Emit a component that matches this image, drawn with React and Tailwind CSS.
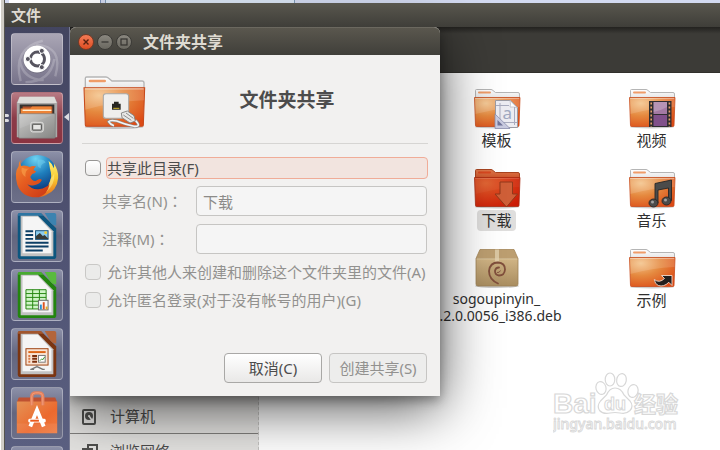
import React, { useState } from 'react';

const FolderIcon = ({ id, open = false, className = 'w-12 h-[42px]', children }) => (
  <svg viewBox="0 0 48 42" className={className} aria-hidden="true">
    <defs>
      <radialGradient id={`${id}-body`} cx="0.25" cy="0.2" r="0.95">
        <stop offset="0" stopColor={open ? '#e0602c' : '#f3c288'} />
        <stop offset="0.45" stopColor={open ? '#d8401a' : '#e5893f'} />
        <stop offset="1" stopColor={open ? '#cb1c06' : '#dc4a15'} />
      </radialGradient>
      <linearGradient id={`${id}-tab`} x1="0" y1="0" x2="0" y2="1">
        <stop offset="0" stopColor={open ? '#e07a4c' : '#ffffff'} />
        <stop offset="1" stopColor={open ? '#c95026' : '#e2e2e2'} />
      </linearGradient>
    </defs>
    <ellipse cx="24" cy="39" rx="22" ry="1.5" fill="#000" opacity="0.2" />
    <path d="M2.500 11V2.500q0-1 1-1H18q1 0 2 1l2.500 2H45q1.500 0 1.500 1.500V11z" fill={`url(#${id}-tab)`} stroke={open ? '#a84420' : '#b5b5b5'} />
    <rect x="5" y="3.500" width="13" height="2" rx="1" fill={open ? '#d9471f' : '#ef9c68'} />
    <path d="M1.500 9.500h45.500L46 37.500q0 1-1 1H3.500q-1 0-1-1z" fill={`url(#${id}-body)`} stroke={open ? '#a82a10' : '#c64a1c'} strokeWidth="0.8" />
    <path d="M2.200 10.400h44" stroke="#fff" opacity={open ? '0.2' : '0.5'} strokeWidth="0.8" />
    <path d="M2 10h44.500v9Q24 20 2.300 26z" fill="#fff" opacity={open ? '0.04' : '0.14'} />
    {children}
  </svg>
);

const TemplateBadge = () => (
  <g>
    <path d="M22.500 12.500h15l7 7v20h-22z" fill="#ececf2" stroke="#9b9ba3" />
    <path d="M37 12.500q1 4 0 6.500 4-.5 7.500 1z" fill="#fff" stroke="#b5b5bd" strokeWidth="0.7" />
    <path d="M27 15v22M41.500 19v18M23 17.500h13M23 34.500h21" stroke="#a9acbf" strokeWidth="1" />
    <text x="29.500" y="31" fontSize="17" fontFamily="Noto Sans" fill="#a0a8c0">a</text>
    <path d="M22 26l15 14.500H22z" fill="#c9cbe0" stroke="#8c8fae" strokeWidth="0.8" />
    <path d="M24.500 32v5.500h5.500z" fill="#70749a" />
  </g>
);

const VideoBadge = () => (
  <g>
    <rect x="21" y="13" width="22.500" height="26" fill="#2f2d30" />
    <rect x="25.500" y="14" width="13.500" height="12" fill="#a47aa3" />
    <rect x="25.500" y="27" width="13.500" height="11" fill="#80508a" />
    <path d="M25.500 14h13.500v5q-7 4-13.500 5z" fill="#fff" opacity="0.2" />
    <path d="M23.200 14.500V39M41.400 14.500V39" stroke="#e5a06a" strokeWidth="1.600" strokeDasharray="2 2" />
  </g>
);

const MusicBadge = () => (
  <g fill="#4b4b4a" stroke="#262626" strokeWidth="0.9">
    <path d="M27 34V15.500L43.500 12v20.500h-3V20L30 22v13z" />
    <ellipse cx="25.500" cy="35" rx="4.500" ry="4" />
    <ellipse cx="38.500" cy="33" rx="4.500" ry="4" />
    <circle cx="24.500" cy="34" r="1.500" fill="#a2a2a2" stroke="none" />
    <circle cx="37.500" cy="32" r="1.500" fill="#a2a2a2" stroke="none" />
  </g>
);

const DownloadBadge = () => (
  <path d="M27 14h12.500v12h5L33.500 39 22 26h5z" fill="#cf5f38" stroke="#92391b" strokeLinejoin="round" />
);

const LinkBadge = () => (
  <path d="M33.500 27.500H44v10l-3.200-3.200q-5 5-10.500 3.200-3.500-1.500-4-6 5 4 10.200-1z" fill="#231f1e" stroke="#f4d9cb" strokeWidth="0.9" />
);

const ShareBadge = () => (
  <g>
    <rect x="16" y="14" width="19" height="18.500" rx="2" fill="#efefed" stroke="#a9a9a7" strokeWidth="0.8" />
    <path d="M22.500 21.500h1.500V20h3.500v1.500H29V26h-6.500z" fill="#272722" />
    <path d="M23.500 25h4.500" stroke="#c9b12c" strokeWidth="0.8" />
    <path d="M40 34q5 5-1 4.500Q32 37 26 34.500q-5-1-6 .5 1 2 4 3" fill="none" stroke="#8b8b89" strokeWidth="2.200" />
    <path d="M40 34q5 5-1 4.500Q32 37 26 34.500q-5-1-6 .5 1 2 4 3" fill="none" stroke="#f4f4f4" strokeWidth="1.200" />
    <path d="M29.500 28.500l4.500-1.500 5 3.500 1 4-4 1.500-6-4z" fill="#e8e8e6" stroke="#828280" strokeWidth="0.7" />
    <path d="M31 30l6 4M33 28.500l5.500 4" stroke="#777" strokeWidth="0.6" />
  </g>
);

const PackageIcon = () => (
  <svg viewBox="0 0 48 42" className="w-12 h-[42px]" aria-hidden="true">
    <defs>
      <linearGradient id="pkg" x1="0" y1="0" x2="0" y2="1">
        <stop offset="0" stopColor="#d0b485" />
        <stop offset="1" stopColor="#a98d60" />
      </linearGradient>
    </defs>
    <ellipse cx="24" cy="38" rx="22" ry="2" fill="#000" opacity="0.2" />
    <path d="M7 1.500h34l4 9H3z" fill="#bc9e70" stroke="#a48659" strokeWidth="0.8" />
    <path d="M3 10.500h42V36q0 2-2 2H5q-2 0-2-2z" fill="url(#pkg)" stroke="#9d8157" strokeWidth="0.8" />
    <path d="M3.500 10.800h41" stroke="#e8d5b0" strokeWidth="0.8" />
    <path d="M22 1.500h4v12h-4z" fill="#e4d3b2" opacity="0.75" />
    <path d="M25 35.500q-9-4-9-12.500 1-8.500 9-8.500 7 .5 7 7-.5 6-6 6-4-.5-4-4.500.5-3.500 4-3.500" fill="none" stroke="#804f3c" strokeWidth="1.800" strokeLinecap="round" />
    <path d="M24 24.500q2.500.5 3.500-2" fill="none" stroke="#804f3c" strokeWidth="0.9" />
  </svg>
);

const UbuntuIcon = () => (
  <svg viewBox="0 0 52 52" className="size-full" aria-hidden="true">
    <g fill="none" stroke="#fff" opacity="0.2" strokeWidth="2.500">
      <path d="M9 49Q0 15 32 7M45 44Q54 13 25 11M14 50q26 0 30-24M8 27q3 20 25 21" />
    </g>
    <circle cx="26" cy="26.500" r="14.500" fill="#000" opacity="0.15" />
    <circle cx="26" cy="26" r="14" fill="#fff" />
    <circle cx="26.500" cy="26" r="7.300" fill="none" stroke="#56545f" strokeWidth="3" strokeDasharray="13.800 1.500" strokeDashoffset="7" />
    <g fill="#56545f" stroke="#fff" strokeWidth="1">
      <circle cx="16.500" cy="26" r="2.600" />
      <circle cx="31" cy="17.500" r="2.600" />
      <circle cx="31" cy="34.500" r="2.600" />
    </g>
  </svg>
);

const FilesIcon = () => (
  <svg viewBox="0 0 52 52" className="size-full" aria-hidden="true">
    <defs>
      <linearGradient id="drawer" x1="0" y1="0" x2="1" y2="1">
        <stop offset="0" stopColor="#c9c9c8" />
        <stop offset="1" stopColor="#858583" />
      </linearGradient>
    </defs>
    <path d="M8 4h36l3 6v36H5V10z" fill="#aaa9a8" />
    <path d="M8 4h36l2.500 6.500h-41z" fill="#deddda" />
    <path d="M8 12h36v11H8z" fill="#353330" />
    <path d="M11 14h31v8H11z" fill="#b4532b" />
    <path d="M9 16h10l2-2h20v9H9z" fill="#ed8336" />
    <path d="M11 18h30" stroke="#fff0d5" strokeWidth="1.500" />
    <path d="M7 21.500h38V46q0 1-1 1H8q-1 0-1-1z" fill="url(#drawer)" stroke="#777" strokeWidth="0.6" />
    <path d="M8 22h36L8 37z" fill="#fff" opacity="0.1" />
    <rect x="19.500" y="30.500" width="13" height="10" rx="2" fill="#ababaa" stroke="#e4e4e2" />
    <rect x="21.500" y="32.500" width="9" height="6" rx="0.500" fill="#e5e5e3" stroke="#474745" />
  </svg>
);

const FirefoxIcon = () => (
  <svg viewBox="0 0 52 52" className="size-full" aria-hidden="true">
    <defs>
      <radialGradient id="globe" cx="0.45" cy="0.1" r="0.8">
        <stop offset="0" stopColor="#6ed3f2" />
        <stop offset="0.5" stopColor="#1f7fbd" />
        <stop offset="1" stopColor="#0c3b80" />
      </radialGradient>
      <linearGradient id="fox" x1="0" y1="0" x2="0.8" y2="1">
        <stop offset="0" stopColor="#f08a32" />
        <stop offset="0.5" stopColor="#e55b20" />
        <stop offset="1" stopColor="#cd3c16" />
      </linearGradient>
      <linearGradient id="tail" x1="0" y1="0" x2="0" y2="1">
        <stop offset="0" stopColor="#fff27a" />
        <stop offset="0.5" stopColor="#f9c92e" />
        <stop offset="1" stopColor="#e86a1d" />
      </linearGradient>
    </defs>
    <circle cx="26.500" cy="23.500" r="20.500" fill="url(#globe)" />
    <path d="M27 8q6-1 8 3-6 2-5 6-5-1-3-9z" fill="#7edaf4" opacity="0.4" />
    <path d="M38 9q4 3 5.500 8 .5-3 0-5 5 7 4.500 15-1 13-13 18-4 2-9 1.500 11-4 12.500-14 3-5 2-11l-1-4q-.5-4-1.500-8.500z" fill="url(#tail)" />
    <path d="M44 22q1 12-9 20 4-7 5-14 2-2 4-6z" fill="#fff3a0" opacity="0.5" />
    <path d="M9 8q-1 4 .5 6.500 4-1.500 9 1 3-1.500 6.500-.5-3 2-2.500 4l2.500 1q-.5 2-4 3l-2 3q2 4.500 6 4 4-3 6-1-2 4.500-8 5.500-4 1-7-1 5 6.500 13 5 6-1 10-5Q37 44 28 47 11 48.500 5.500 34 2 21 7 14.500q0-4 2-6.500z" fill="url(#fox)" />
    <path d="M10 16q5 2 8 1-5 3-4 9-5-3-4-10z" fill="#f9a04a" opacity="0.65" />
  </svg>
);

const OfficeIcon = ({ color, fold, children }) => (
  <svg viewBox="0 0 52 52" className="size-full" aria-hidden="true">
    <path d="M8 2h22l16 16v29q0 3-3 3H9q-3 0-3-3V4q0-2 2-2z" fill={color} />
    <path d="M34 2h10q2 0 2 2v11q-4 0-6-3z" fill={fold} />
    <path d="M6 4q0-2 2-2h22l3 3H6z" fill={fold} opacity="0.7" />
    <path d="M9 5h18l16 16v26H9z" fill="#c2c2c2" />
    <path d="M11 6h16l14 15v23H11z" fill="#f5f5f5" />
    {children}
  </svg>
);

const WriterIcon = () => (
  <OfficeIcon color="#0d567f" fold="#3c83b0">
    <path d="M14 21h8M14 25h8M14 29h8M14 33h24M14 37h24M14 41h18" stroke="#0d3f66" strokeWidth="2" />
    <rect x="24.500" y="20.500" width="13" height="9" fill="#8bcbed" stroke="#174f76" />
    <circle cx="35" cy="22.500" r="1.500" fill="#f3cf35" />
    <path d="M25 29v-3l4-3 3 3 2-1 4 4z" fill="#373a36" />
  </OfficeIcon>
);

const CalcIcon = () => (
  <OfficeIcon color="#23850f" fold="#59ba3e">
    <path d="M14.500 20.500h21v20h-21zM21.500 20.500v20M28.500 20.500v20M14.500 24.500h21M14.500 28.500h21M14.500 32.500h21M14.500 36.500h21" fill="#cff5c7" stroke="#23850f" />
    <rect x="27.500" y="31.500" width="10" height="10" fill="#f7f7f7" stroke="#6b6b6b" />
    <path d="M30 36v5" stroke="#2891cf" strokeWidth="2" />
    <path d="M33 33.500V41" stroke="#dd5420" strokeWidth="2" />
    <path d="M36 38v3" stroke="#e4aa23" strokeWidth="2" />
  </OfficeIcon>
);

const ImpressIcon = () => (
  <OfficeIcon color="#7b3511" fold="#b3653b">
    <rect x="14.500" y="20.500" width="23" height="17" fill="#f9e3d3" stroke="#9c3e0c" />
    <path d="M17 24h18" stroke="#dc6416" strokeWidth="2" />
    <path d="M17 28h2M17 31h2M17 34h2" stroke="#d87744" strokeWidth="2" />
    <path d="M21 28h5M21 31h5M21 34h5" stroke="#7c2f0d" strokeWidth="2" />
    <rect x="27.500" y="27.500" width="7" height="7" fill="#fff" stroke="#777" />
    <path d="M29 33l2-2 1 1 2-3" fill="none" stroke="#35952c" />
    <path d="M26 38v2M20 42l6-3 6 3M19 42h4M30 42h4" fill="none" stroke="#777" strokeWidth="1.500" />
  </OfficeIcon>
);

const SoftwareIcon = () => (
  <svg viewBox="0 0 52 52" className="size-full" aria-hidden="true">
    <defs>
      <linearGradient id="bag" x1="0" y1="0" x2="1" y2="1">
        <stop offset="0" stopColor="#e49356" />
        <stop offset="0.6" stopColor="#ec692e" />
        <stop offset="1" stopColor="#ee7c42" />
      </linearGradient>
    </defs>
    <path d="M7 10h38l2 5H5z" fill="#bf5131" />
    <path d="M5 14h42v33H5z" fill="url(#bag)" />
    <path d="M5 37h42v10H5z" fill="#fff" opacity="0.08" />
    <path d="M20.500 18V9q0-4 4-4h3.500q4 0 4 4v9" fill="none" stroke="#e4805c" strokeWidth="3.500" />
    <path d="M20.500 18V9q0-4 4-4h3.500q4 0 4 4v9" fill="none" stroke="#f19d79" strokeWidth="1" />
    <path d="M19 40l7-17 7 17" fill="none" stroke="#fff" strokeWidth="4" />
    <rect x="17" y="32" width="18" height="4" rx="1.500" fill="#fff" />
    <path d="M19 34h9" stroke="#eb5a1c" strokeWidth="2" />
  </svg>
);

const BaiduMark = () => (
  <svg viewBox="0 0 130 64" className="w-[130px] h-16" aria-hidden="true">
    <g fill="#fff" stroke="#d8d8d8" strokeWidth="1.200">
      <text x="0" y="41" fontSize="28" fontWeight="700" fontFamily="Liberation Sans">Bai</text>
      <ellipse cx="48" cy="16" rx="5" ry="6.500" transform="rotate(-15 48 16)" />
      <ellipse cx="57" cy="7.500" rx="4.800" ry="6.500" />
      <ellipse cx="68.500" cy="8" rx="4.800" ry="6.500" transform="rotate(10 68.500 8)" />
      <ellipse cx="80" cy="19" rx="5" ry="6.500" transform="rotate(15 80 19)" />
      <path d="M62 16q6 0 9 7l6 6q4 5 0 9.500-4 4-10 2.500-5-1-10 0-7 1.500-10.500-2.500-3-4.500 1-9.500l6-6q3-7 8.500-7z" />
      <text x="51" y="38" fontSize="18" fontWeight="700" fontFamily="Liberation Sans" strokeWidth="1">du</text>
      <text x="81" y="40" fontSize="22" fontWeight="700" fontFamily="Noto Sans CJK SC">经验</text>
      <text x="0" y="57" fontSize="14" fontWeight="500" fontFamily="Noto Sans" strokeWidth="0.900">jingyan.baidu.com</text>
    </g>
  </svg>
);

const launcherItems = [
  { label: 'Ubuntu', icon: <UbuntuIcon />, tone: 'bg-linear-to-b from-[#aaa6b5] to-[#77738a]' },
  { label: 'Files', icon: <FilesIcon />, tone: 'bg-linear-to-b from-[#b87a84] via-[#8b3b48] to-[#8b3341]', active: true },
  { label: 'Firefox', icon: <FirefoxIcon /> },
  { label: 'Writer', icon: <WriterIcon /> },
  { label: 'Calc', icon: <CalcIcon /> },
  { label: 'Impress', icon: <ImpressIcon /> },
  { label: 'Software', icon: <SoftwareIcon /> },
  { label: 'Settings', icon: null },
];

const files = [
  { name: '模板', col: 'col-start-2', icon: <FolderIcon id="tpl"><TemplateBadge /></FolderIcon> },
  { name: '视频', col: 'col-start-3', icon: <FolderIcon id="vid"><VideoBadge /></FolderIcon> },
  { name: '下载', col: 'col-start-2', icon: <FolderIcon id="dl" open><DownloadBadge /></FolderIcon>, selected: true },
  { name: '音乐', col: 'col-start-3', icon: <FolderIcon id="mus"><MusicBadge /></FolderIcon> },
  { name: 'sogoupinyin_1.2.0.0056_i386.deb', lines: ['sogoupinyin_', '1.2.0.0056_i386.deb'], col: 'col-start-2', icon: <PackageIcon /> },
  { name: '示例', col: 'col-start-3', icon: <FolderIcon id="ex"><LinkBadge /></FolderIcon> },
];

const Launcher = () => (
  <nav className="relative z-20 flex w-[65px] shrink-0 flex-col items-center gap-[7px] overflow-hidden border-r border-[#777a92] bg-linear-to-b from-[#434560] via-[#4f5272] to-[#5a5f80] pt-1.5">
    {launcherItems.map((item) => (
      <div key={item.label} className="relative flex w-full shrink-0 justify-center">
        <button
          aria-label={item.label}
          className={`size-[52px] rounded-[4px] border border-white/30 ${item.tone || 'bg-linear-to-b from-[#8c90a8] via-[#63667f] to-[#6c6f88]'}`}
        >
          {item.icon}
        </button>
        {item.active && (
          <>
            <span className="absolute top-[22px] left-0 flex flex-col gap-[2px]">
              <span className="h-[3px] w-1 rounded-r-full bg-[#dcdce2]" />
              <span className="h-[3px] w-1 rounded-r-full bg-[#dcdce2]" />
            </span>
            <span className="absolute top-[21px] right-0 border-y-4 border-r-5 border-y-transparent border-r-[#dcdce2]" />
          </>
        )}
      </div>
    ))}
  </nav>
);

const Sidebar = () => (
  <aside className="w-[189px] shrink-0 overflow-hidden border-r border-dashed border-[#c4c3c1] bg-[#e4e3e1] pt-[327px] text-[15px] text-[#4c4c4c]">
    <a href="#computer" className="flex h-[34px] items-center gap-3.5 border-b border-[#807f7d] pl-3">
      <svg viewBox="0 0 14 16" className="h-4 w-3.5" aria-hidden="true">
        <rect x="1" y="1" width="12" height="14" rx="1" fill="none" stroke="#4f4f4d" strokeWidth="2" />
        <circle cx="7" cy="7" r="4" fill="#4f4f4d" />
        <path d="M7 7l3.500 5" stroke="#e9e8e6" strokeWidth="1.500" />
        <circle cx="7" cy="7" r="1" fill="#e9e8e6" />
      </svg>
      计算机
    </a>
    <a href="#network" className="flex h-[34px] items-center gap-3 pl-3">
      <svg viewBox="0 0 16 14" className="h-3.5 w-4" aria-hidden="true">
        <path d="M6 4V1h9v8h-4M1 5h9v8H1z" fill="none" stroke="#4f4f4d" strokeWidth="2" />
      </svg>
      浏览网络
    </a>
  </aside>
);

const FileGrid = () => (
  <main className="grid flex-1 auto-rows-[80px] grid-cols-[repeat(3,155px)] content-start overflow-hidden bg-white pt-[15px] pl-[5px]">
    {files.map((file) => (
      <button key={file.name} className={`flex flex-col items-center ${file.col}`}>
        {file.icon}
        <span
          className={`rounded-[4px] px-1 leading-[17px] text-[#2f2f2f] ${file.selected ? 'bg-[#dfdedd]' : ''} ${file.lines ? 'text-[14px]' : 'py-[2px] text-[15px]'}`}
        >
          {file.lines
            ? file.lines.map((line) => <span key={line} className="block whitespace-nowrap">{line}</span>)
            : file.name}
        </span>
      </button>
    ))}
  </main>
);

const Colon = () => <span className="font-['Noto_Sans_CJK_TC',sans-serif] leading-none">：</span>;

const ShareDialog = () => {
  const [shared, setShared] = useState(false);
  const [name, setName] = useState('下载');
  const [comment, setComment] = useState('');
  const box = 'ml-[3px] size-4 shrink-0 appearance-none rounded-[4px] border';
  const field = 'mr-px h-[30px] min-w-0 flex-1 rounded-[4px] border border-[#c6c5c3] bg-[#f5f5f5] px-1.5 text-[#8c8b89]';

  return (
    <section
      role="dialog"
      aria-labelledby="dialog-title"
      className="absolute top-0 left-[65px] z-10 w-[370px] rounded-t-[6px] bg-[#f2f1f0] text-[15px] text-[#4c4c4c] shadow-[0_4px_12px_rgba(0,0,0,0.35),0_12px_56px_rgba(0,0,0,0.68)]"
    >
      <header className="flex h-7 items-center gap-[3px] rounded-t-[6px] border-t border-[#6b685f] bg-linear-to-b from-[#5a574e] to-[#403f3a] pl-2">
        <button aria-label="Close" className="size-4 rounded-full border border-[#7a3a25] bg-linear-to-b from-[#f47b55] to-[#dd4d20]">
          <svg viewBox="0 0 14 14" className="size-full" aria-hidden="true">
            <path d="M4.500 4.500l5 5M9.500 4.500l-5 5" stroke="#55200f" strokeWidth="1.400" />
          </svg>
        </button>
        <button aria-label="Minimize" className="size-4 rounded-full border border-[#3c3b37] bg-linear-to-b from-[#8a877f] to-[#6a6860]">
          <svg viewBox="0 0 14 14" className="size-full" aria-hidden="true">
            <path d="M3.500 7h7" stroke="#34332f" strokeWidth="1.200" />
          </svg>
        </button>
        <button aria-label="Maximize" className="size-4 rounded-full border border-[#3c3b37] bg-linear-to-b from-[#8a877f] to-[#6a6860]">
          <svg viewBox="0 0 14 14" className="size-full" aria-hidden="true">
            <rect x="4" y="4" width="6" height="6" fill="none" stroke="#34332f" strokeWidth="1.200" />
          </svg>
        </button>
        <h1 id="dialog-title" className="ml-2 text-[16px] font-bold text-[#dfdbd2]">文件夹共享</h1>
      </header>

      <form className="px-3 pt-3 pb-[13px]" onSubmit={(e) => e.preventDefault()}>
        <div className="flex items-center border-b border-[#d6d5d3] pt-2 pb-3">
          <FolderIcon id="share" className="h-14 w-16"><ShareBadge /></FolderIcon>
          <h2 className="flex-1 pb-1.5 text-center text-[19px] font-bold leading-6">文件夹共享</h2>
        </div>

        <div className="mt-[13px] flex items-center gap-[5px]">
          <input
            id="share-folder"
            type="checkbox"
            checked={shared}
            onChange={(e) => setShared(e.target.checked)}
            className={`${box} border-[#979694] bg-linear-to-b from-white to-[#eeedec] checked:bg-[#f07746]`}
          />
          <label htmlFor="share-folder" className="h-[22px] flex-1 rounded-[4px] border border-[#f0ac98] bg-[#f2e4df] leading-[21px]">
            共享此目录(F)
          </label>
        </div>

        <div className="mt-[7px] flex items-center text-[#92918f]">
          <label htmlFor="share-name" className="w-[114px] shrink-0 pl-5">共享名(N)<Colon /></label>
          <input id="share-name" value={name} onChange={(e) => setName(e.target.value)} disabled={!shared} className={field} />
        </div>
        <div className="mt-2 flex items-center text-[#92918f]">
          <label htmlFor="share-comment" className="w-[114px] shrink-0 pl-5">注释(M)<Colon /></label>
          <input id="share-comment" value={comment} onChange={(e) => setComment(e.target.value)} disabled={!shared} className={field} />
        </div>

        <div className="mt-2 flex h-5 items-center gap-1.5 text-[#92918f]">
          <input id="allow-others" type="checkbox" disabled={!shared} className={`${box} border-[#c9c8c6] bg-[#ebebea]`} />
          <label htmlFor="allow-others" className="whitespace-nowrap">允许其他人来创建和删除这个文件夹里的文件(A)</label>
        </div>
        <div className="mt-2 flex h-5 items-center gap-1.5 text-[#92918f]">
          <input id="allow-guests" type="checkbox" disabled={!shared} className={`${box} border-[#c9c8c6] bg-[#ebebea]`} />
          <label htmlFor="allow-guests" className="whitespace-nowrap">允许匿名登录(对于没有帐号的用户)(G)</label>
        </div>

        <div className="mt-[43px] mr-px flex justify-end gap-[7px]">
          <button type="button" className="h-[30px] w-[98px] rounded-[4px] border border-[#a9a8a6] bg-linear-to-b from-white to-[#e9e8e7]">取消(C)</button>
          <button type="submit" disabled={!shared} className="h-[30px] w-[98px] rounded-[4px] border border-[#c6c5c3] bg-[#ededec] text-[#92918f]">创建共享(S)</button>
        </div>
      </form>
    </section>
  );
};

const App = () => (
  <div className="flex h-screen overflow-hidden bg-white font-['Noto_Sans','Noto_Sans_CJK_SC',sans-serif]">
    <div className="w-[5px] shrink-0 border-r border-l border-l-white border-r-[#55544e] bg-[#d0cdc6]" />
    <div className="flex min-w-0 flex-1 flex-col">
      <div className="flex h-[3px] shrink-0 bg-[#d3daf0]">
        <div className="ml-1 w-[92px] border-r border-[#7f93b8] bg-white" />
        <div className="ml-1 w-[190px] border-x border-[#7f9bb8] bg-[#dce7f6]" />
      </div>
      <header className="relative z-20 flex h-6 shrink-0 items-center bg-linear-to-b from-[#59574e] to-[#3f3e39] pl-1.5 text-[15px] font-bold text-[#dfdbd2]">
        文件
      </header>
      <div className="relative flex min-h-0 flex-1">
        <Launcher />
        <div className="flex min-w-0 flex-1 flex-col">
          <div className="h-[46px] shrink-0 border-b border-[#31302c] bg-linear-to-b from-[#23221f] via-[#3c3b37] via-15% to-[#3c3b37]" />
          <div className="flex min-h-0 flex-1">
            <Sidebar />
            <FileGrid />
          </div>
        </div>
        <ShareDialog />
        <div className="absolute right-[37px] bottom-3.5">
          <BaiduMark />
        </div>
      </div>
    </div>
  </div>
);

export default App;
